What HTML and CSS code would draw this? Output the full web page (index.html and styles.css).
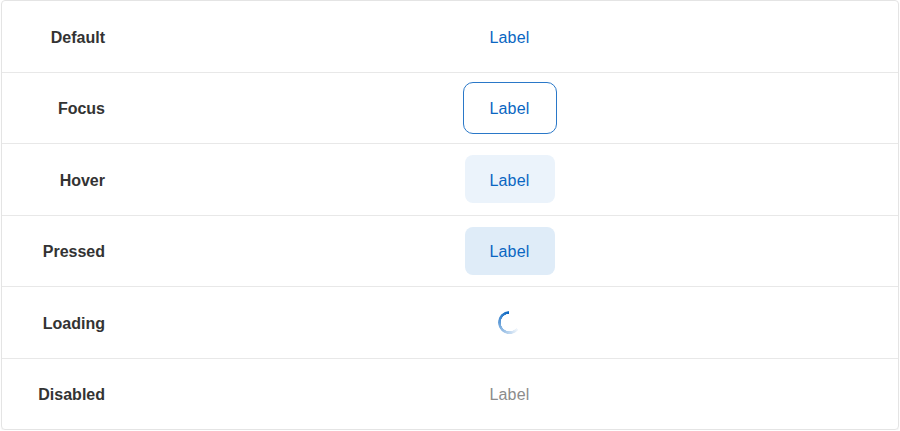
FILE: index.html
```html
<!DOCTYPE html>
<html>
<head>
<meta charset="utf-8">
<link rel="stylesheet" href="styles.css">
</head>
<body>
<div class="card">
  <div class="row">
    <div class="name">Default</div>
    <div class="cell"><span class="btn">Label</span></div>
  </div>
  <div class="row">
    <div class="name">Focus</div>
    <div class="cell"><span class="btn focus">Label</span></div>
  </div>
  <div class="row">
    <div class="name">Hover</div>
    <div class="cell"><span class="btn hover">Label</span></div>
  </div>
  <div class="row">
    <div class="name">Pressed</div>
    <div class="cell"><span class="btn pressed">Label</span></div>
  </div>
  <div class="row">
    <div class="name">Loading</div>
    <div class="cell"><span class="spinner"></span></div>
  </div>
  <div class="row">
    <div class="name">Disabled</div>
    <div class="cell"><span class="btn disabled">Label</span></div>
  </div>
</div>
</body>
</html>
```
FILE: styles.css
```css
html, body {
  margin: 0;
  padding: 0;
  background: #ffffff;
}
body {
  padding: 0 1px;
  font-family: "Liberation Sans", Arial, sans-serif;
}
.card {
  border: 1px solid #e4e4e4;
  border-radius: 4px;
  box-shadow: 0 1px 1px rgba(0,0,0,0.05);
}
.row {
  display: grid;
  grid-template-columns: 119px 1fr;
  height: 70.5px;
  border-bottom: 1px solid #e8e8e8;
  align-items: center;
}
.row:last-child {
  border-bottom: none;
  height: 70px;
}
.name {
  text-align: right;
  padding-right: 16px;
  padding-top: 3px;
  font-size: 16px;
  font-weight: bold;
  color: #333333;
}
.cell {
  display: flex;
  justify-content: center;
  align-items: center;
}
.btn {
  display: inline-flex;
  align-items: center;
  justify-content: center;
  width: 90px;
  height: 48px;
  padding-top: 3px;
  box-sizing: border-box;
  border-radius: 8px;
  font-size: 16px;
  letter-spacing: 0.2px;
  color: #0a66c2;
}
.focus {
  outline: 1px solid #2a78c8;
  outline-offset: 1px;
}
.hover {
  background: #ebf3fb;
}
.pressed {
  background: #dfecf8;
}
.disabled {
  color: #8c8c8c;
}
.spinner {
  display: block;
  width: 23px;
  height: 23px;
  border-radius: 50%;
  background: conic-gradient(transparent 0deg 130deg, rgba(10,102,194,0.05) 130deg, #0a66c2 355deg, transparent 355deg);
  -webkit-mask: radial-gradient(circle, transparent 8.5px, #000 9px);
  mask: radial-gradient(circle, transparent 8.5px, #000 9px);
}
```
